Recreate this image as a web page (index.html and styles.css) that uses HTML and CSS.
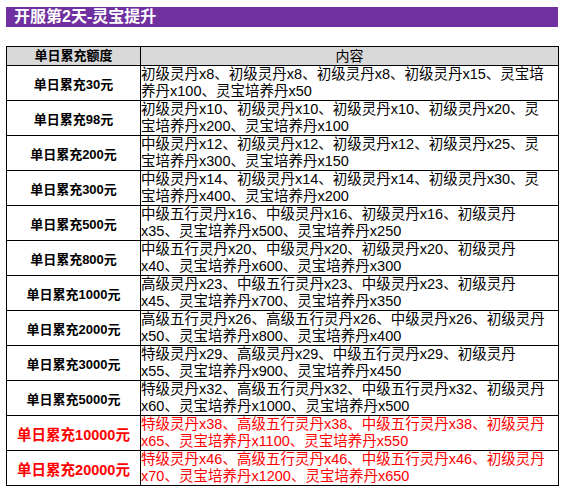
FILE: index.html
```html
<!DOCTYPE html>
<html lang="zh">
<head>
<meta charset="utf-8">
<link rel="stylesheet" href="styles.css">
</head>
<body>
<div class="page">
  <div class="title">开服第2天-灵宝提升</div>
  <table class="rewards">
    <colgroup><col class="c1"><col class="c2"></colgroup>
    <thead>
      <tr><th class="h-amount">单日累充额度</th><th class="h-content">内容</th></tr>
    </thead>
    <tbody>
      <tr><td class="amt">单日累充30元</td><td class="txt">初级灵丹x8、初级灵丹x8、初级灵丹x8、初级灵丹x15、灵宝培<br>养丹x100、灵宝培养丹x50</td></tr>
      <tr><td class="amt">单日累充98元</td><td class="txt">初级灵丹x10、初级灵丹x10、初级灵丹x10、初级灵丹x20、灵<br>宝培养丹x200、灵宝培养丹x100</td></tr>
      <tr><td class="amt">单日累充200元</td><td class="txt">中级灵丹x12、初级灵丹x12、初级灵丹x12、初级灵丹x25、灵<br>宝培养丹x300、灵宝培养丹x150</td></tr>
      <tr><td class="amt">单日累充300元</td><td class="txt">中级灵丹x14、初级灵丹x14、初级灵丹x14、初级灵丹x30、灵<br>宝培养丹x400、灵宝培养丹x200</td></tr>
      <tr><td class="amt">单日累充500元</td><td class="txt">中级五行灵丹x16、中级灵丹x16、初级灵丹x16、初级灵丹<br>x35、灵宝培养丹x500、灵宝培养丹x250</td></tr>
      <tr><td class="amt">单日累充800元</td><td class="txt">中级五行灵丹x20、中级灵丹x20、初级灵丹x20、初级灵丹<br>x40、灵宝培养丹x600、灵宝培养丹x300</td></tr>
      <tr><td class="amt">单日累充1000元</td><td class="txt">高级灵丹x23、中级五行灵丹x23、中级灵丹x23、初级灵丹<br>x45、灵宝培养丹x700、灵宝培养丹x350</td></tr>
      <tr><td class="amt">单日累充2000元</td><td class="txt">高级五行灵丹x26、高级五行灵丹x26、中级灵丹x26、初级灵丹<br>x50、灵宝培养丹x800、灵宝培养丹x400</td></tr>
      <tr><td class="amt">单日累充3000元</td><td class="txt">特级灵丹x29、高级灵丹x29、中级五行灵丹x29、初级灵丹<br>x55、灵宝培养丹x900、灵宝培养丹x450</td></tr>
      <tr><td class="amt">单日累充5000元</td><td class="txt">特级灵丹x32、高级五行灵丹x32、中级五行灵丹x32、初级灵丹<br>x60、灵宝培养丹x1000、灵宝培养丹x500</td></tr>
      <tr class="hot"><td class="amt">单日累充10000元</td><td class="txt">特级灵丹x38、高级五行灵丹x38、中级五行灵丹x38、初级灵丹<br>x65、灵宝培养丹x1100、灵宝培养丹x550</td></tr>
      <tr class="hot"><td class="amt">单日累充20000元</td><td class="txt">特级灵丹x46、高级五行灵丹x46、中级五行灵丹x46、初级灵丹<br>x70、灵宝培养丹x1200、灵宝培养丹x650</td></tr>
    </tbody>
  </table>
</div>
</body>
</html>
```

FILE: styles.css
```css
html, body {
  margin: 0;
  padding: 0;
  background: #ffffff;
}
.page {
  padding: 7px 6px 0 6px;
  font-family: "Liberation Sans", "Noto Sans CJK SC", sans-serif;
  color: #000;
}
.title {
  background: #7030a0;
  color: #ffffff;
  font-weight: bold;
  font-size: 16px;
  height: 20px;
  line-height: 20px;
  padding-left: 8px;
  margin-bottom: 19px;
}
.rewards {
  width: 553px;
  border-collapse: collapse;
  table-layout: fixed;
}
.c1 { width: 134px; }
.rewards th, .rewards td {
  border: 1px solid #000;
  padding: 0;
}
.rewards th {
  background: #d9d9d9;
  height: 18px;
  line-height: 18px;
  text-align: center;
}
.h-amount {
  font-size: 13px;
  font-weight: bold;
}
.h-content {
  font-size: 14px;
  font-weight: normal;
}
.rewards td {
  height: 34px;
}
.amt {
  text-align: center;
  font-size: 13px;
  font-weight: bold;
}
.txt {
  font-size: 14.5px;
  line-height: 17px;
  padding-left: 10px;
  white-space: nowrap;
  vertical-align: middle;
}
.hot td {
  color: #ff0000;
}
.hot .amt {
  font-size: 14.5px;
}
```
